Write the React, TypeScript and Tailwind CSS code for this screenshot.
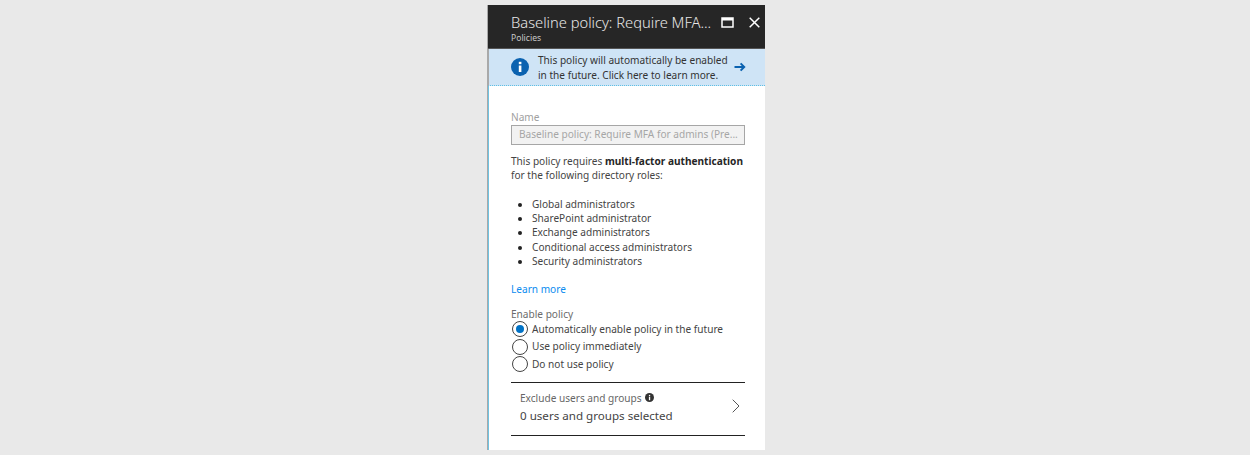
import React from "react";

const font = { fontFamily: '"Noto Sans", "Open Sans", sans-serif' };

function Radio({ checked, label }: { checked?: boolean; label: string }) {
  return (
    <div className="flex items-center h-[17.5px]">
      <div className="w-[16px] h-[16px] rounded-full border border-[#444] bg-white flex items-center justify-center ml-px shrink-0">
        {checked && <div className="w-[8px] h-[8px] rounded-full bg-[#0072c6]" />}
      </div>
      <span className="ml-[4px] text-[10.1px] text-[#444] whitespace-nowrap">{label}</span>
    </div>
  );
}

export default function App() {
  const roles = [
    "Global administrators",
    "SharePoint administrator",
    "Exchange administrators",
    "Conditional access administrators",
    "Security administrators",
  ];
  return (
    <div className="w-[1250px] h-[455px] bg-[#e9e9e9] pl-[487px] pt-[5px] overflow-hidden" style={font}>
      <div className="w-[278px] h-[445px] bg-white flex flex-col border-l border-[#a9a9a9]">
        <div className="h-[44px] bg-[#262626] border-b border-b-[#555] flex items-start pl-[23px] shrink-0">
          <div className="flex-1 min-w-0 pt-[6px]">
            <div className="text-[14.7px] leading-[22px] text-[#e8e8e8] font-light whitespace-nowrap">Baseline policy: Require MFA...</div>
            <div className="text-[8.6px] leading-[10px] text-[#c8c8c8]">Policies</div>
          </div>
          <div className="flex items-center gap-[15px] pt-[12px] pr-[5px] shrink-0">
            <svg width="13" height="11" viewBox="0 0 13 11"><rect x="1" y="1" width="11" height="9" fill="none" stroke="#fff" strokeWidth="1.5" /><rect x="1" y="1" width="11" height="2.5" fill="#fff" /></svg>
            <svg width="11" height="11" viewBox="0 0 11 11"><path d="M0.7 0.7L10.3 10.3M10.3 0.7L0.7 10.3" stroke="#fff" strokeWidth="1.5" /></svg>
          </div>
        </div>
        <div className="h-[37px] bg-[#cfe4f6] border-l border-l-[#a9a9a9] [border-bottom-style:dotted] border-b border-b-[#5fc0e4] flex items-center pl-[22px] shrink-0">
          <svg width="18" height="18" viewBox="0 0 18 18" className="shrink-0">
            <circle cx="9" cy="9" r="9" fill="#0b62b0" />
            <rect x="7.8" y="7.5" width="2.6" height="6.5" fill="#fff" />
            <rect x="7.8" y="3.8" width="2.6" height="2.4" fill="#fff" />
          </svg>
          <div className="ml-[9px] text-[10.1px] leading-[14.2px] pt-px text-[#333] whitespace-nowrap w-[196px]">
            This policy will automatically be enabled<br />in the future. Click here to learn more.
          </div>
          <svg width="12" height="10" viewBox="0 0 12 10" className="shrink-0">
            <path d="M0.5 5H10M6.6 1.4L10.2 5L6.6 8.6" fill="none" stroke="#0b62b0" strokeWidth="2" />
          </svg>
        </div>
        <div className="flex-1 border-l border-l-[#6fc3e2] pl-[22px] pr-[20px] text-[#444] text-[10.1px]">
          <div className="leading-[14px] text-[#a0a0a0] mt-[24px]">Name</div>
          <div className="h-[20px] w-[234px] border border-[#a6a6a6] bg-[#f2f2f2] text-[#a6a6a6] pl-[7px] flex items-center leading-none whitespace-nowrap mt-[0.5px]">
            Baseline policy: Require MFA for admins (Pre...
          </div>
          <div className="leading-[14.2px] mt-[9px] whitespace-nowrap">
            This policy requires <b className="font-bold text-[#262626]">multi-factor authentication</b><br />for the following directory roles:
          </div>
          <ul className="list-disc pl-[21px] mt-[15px] leading-[14.2px] marker:text-[#222]">
            {roles.map((r) => <li key={r}>{r}</li>)}
          </ul>
          <div className="text-[#0a8cf0] leading-[14px] mt-[14px]">Learn more</div>
          <div className="text-[#6b6b6b] leading-[14px] mt-[11px]">Enable policy</div>
          <div className="-mt-[0.5px]">
            <Radio checked label="Automatically enable policy in the future" />
            <Radio label="Use policy immediately" />
            <Radio label="Do not use policy" />
          </div>
          <div className="w-[234px] h-[54px] mt-[9px] border-t border-b border-[#222] pl-[9px] pr-[5px] flex items-center justify-between">
            <div className="-mt-[3px]">
              <div className="flex items-center text-[#666] leading-[14px]">
                Exclude users and groups
                <svg width="9" height="9" viewBox="0 0 9 9" className="ml-[3px]"><circle cx="4.5" cy="4.5" r="4.5" fill="#333" /><rect x="3.9" y="3.7" width="1.3" height="3.5" fill="#fff" /><rect x="3.9" y="1.9" width="1.3" height="1.2" fill="#fff" /></svg>
              </div>
              <div className="text-[11.6px] leading-[17px] text-[#444] mt-[2px]">0 users and groups selected</div>
            </div>
            <svg width="8" height="14" viewBox="0 0 8 14" className="-mt-[5px]"><path d="M0.7 0.7L7 7L0.7 13.3" fill="none" stroke="#555" strokeWidth="1" /></svg>
          </div>
        </div>
      </div>
    </div>
  );
}
